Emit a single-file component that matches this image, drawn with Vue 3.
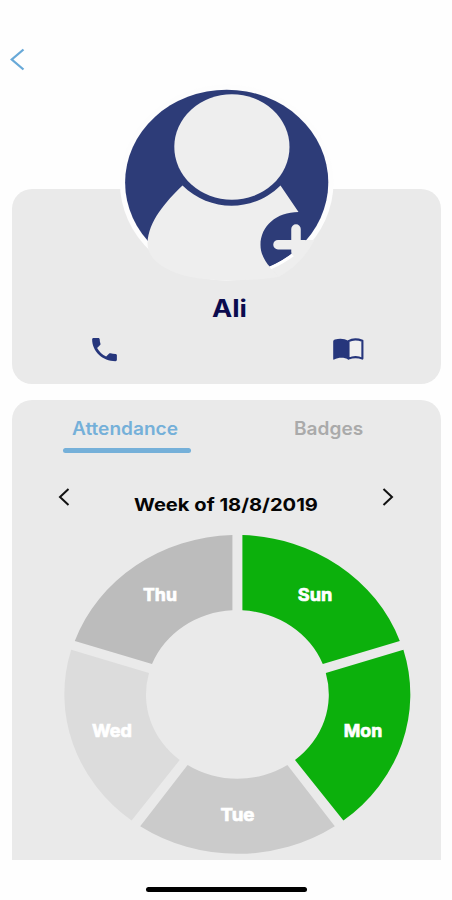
<template>
  <div class="screen">
    <header class="top-bar">
      <button class="icon-btn" aria-label="Back">
        <svg width="16" height="24" viewBox="0 0 16 24">
          <path d="M14.5 2.5 2.8 12.5 14.5 22.5" />
        </svg>
      </button>
    </header>

    <section class="card profile-card">
      <svg class="avatar" width="216" height="202" viewBox="118.5 82 216 202">
        <defs>
          <clipPath id="photo">
            <ellipse cx="226.2" cy="182.5" rx="101.6" ry="92.8" />
          </clipPath>
        </defs>
        <ellipse cx="226.2" cy="182.5" rx="106.8" ry="98" fill="#fdfdfd" />
        <ellipse cx="226.2" cy="182.5" rx="101.6" ry="92.8" fill="#2d3c78" />
        <path
          class="body"
          d="M182 185.5C165 202 148 221 147 243C147 262 168 272 190 277C213 281.5 250 281.5 278 277L270 267.5C263 260 260 252 260 245C260 226 276 212 298 212L280 185.5C252 213 209 212 182 185.5Z"
        />
        <path class="body" d="M270 267.5Q292 258 306 240L314 240Q302 264 278 277Z" />
        <path class="edge" d="M270 268Q283 262 293 254.5" />
        <g clip-path="url(#photo)">
          <ellipse cx="231.4" cy="147" rx="57.6" ry="52.8" class="body" />
        </g>
        <path class="plus" d="M277.5 244.7H304M295.5 229V252" />
      </svg>

      <h1 class="name">{{ student.name }}</h1>

      <div class="actions">
        <button class="icon-btn" aria-label="Call">
          <svg width="33" height="31" viewBox="0 0 24 24" preserveAspectRatio="none">
            <path
              fill="#26367c"
              d="M6.62 10.79c1.44 2.83 3.76 5.14 6.59 6.59l2.2-2.2c.27-.27.67-.36 1.02-.24 1.12.37 2.33.57 3.57.57.55 0 1 .45 1 1V20c0 .55-.45 1-1 1-9.39 0-17-7.61-17-17 0-.55.45-1 1-1h3.5c.55 0 1 .45 1 1 0 1.25.2 2.45.57 3.57.11.35.03.74-.25 1.02l-2.2 2.2z"
            />
          </svg>
        </button>
        <button class="icon-btn" aria-label="Notes">
          <svg width="32" height="24" viewBox="0 0 32 24">
            <path
              fill="#26367c"
              d="M1.2 4.2Q1.5 3 3 2.6C7.5 1.2 12.5 1.5 16.5 4V22.5C12.5 20.2 6.5 20 2.2 22.6Q1.2 23 1.2 22Z"
            />
            <path
              fill="#f0f0f0"
              stroke="#26367c"
              stroke-width="2.1"
              stroke-linejoin="round"
              d="M16.5 4.2C20 2.2 26 2.2 30.4 3.8V21.6C26 19.7 20.5 20 16.5 21.6Z"
            />
          </svg>
        </button>
      </div>
    </section>

    <section class="card report-card">
      <nav class="tabs">
        <button
          v-for="tab in tabs"
          :key="tab"
          class="tab"
          :class="{ active: tab === activeTab }"
          @click="activeTab = tab"
        >
          <span class="tab-label">{{ tab }}</span>
        </button>
      </nav>

      <div class="week-nav">
        <button class="icon-btn" aria-label="Previous week">
          <svg width="14" height="20" viewBox="0 0 14 20">
            <path d="M11.5 2 3 10 11.5 18" />
          </svg>
        </button>
        <span class="week-label">Week of {{ student.week }}</span>
        <button class="icon-btn" aria-label="Next week">
          <svg width="14" height="20" viewBox="0 0 14 20">
            <path d="M2.5 2 11 10 2.5 18" />
          </svg>
        </button>
      </div>

      <svg class="chart" width="352" height="326" viewBox="61 534 352 326">
        <g v-for="day in days" :key="day.label">
          <path :d="day.path" :fill="day.color" />
          <text
            :x="day.x"
            :y="day.y"
            :textLength="day.width"
            lengthAdjust="spacingAndGlyphs"
          >
            {{ day.label }}
          </text>
        </g>
      </svg>
    </section>

    <footer class="home-area">
      <div class="home-indicator"></div>
    </footer>
  </div>
</template>

<script setup>
import { ref } from "vue";

const student = { name: "Ali", week: "18/8/2019" };

const tabs = ["Attendance", "Badges"];
const activeTab = ref("Attendance");

// outer and inner arc radii of the ring
const OUTER = "173.2 159.6";
const INNER = "91.2 84.3";

// corners: outer start, outer end, inner end, inner start
const slice = (a, b, c, d) =>
  `M${a}A${OUTER} 0 0 1 ${b}L${c}A${INNER} 0 0 0 ${d}Z`;

const days = [
  {
    label: "Sun",
    color: "#0cb00c",
    path: slice("242.4 535", "399.8 641", "322.8 664", "242.4 610.3"),
    x: 315,
    y: 601,
    width: 34.5,
  },
  {
    label: "Mon",
    color: "#0cb00c",
    path: slice("403.4 649.8", "343.4 820.5", "295 760", "325.8 673"),
    x: 363,
    y: 737,
    width: 38.5,
  },
  {
    label: "Tue",
    color: "#cbcbcb",
    path: slice("334.8 826.3", "140.2 826.3", "187.6 765", "287.4 765"),
    x: 237.5,
    y: 821,
    width: 34,
  },
  {
    label: "Wed",
    color: "#dcdcdc",
    path: slice("131.6 820.5", "71.2 649.8", "149 673", "179.7 760"),
    x: 112,
    y: 737,
    width: 40,
  },
  {
    label: "Thu",
    color: "#bcbcbc",
    path: slice("74.8 641", "232.4 535", "232.4 610.3", "152 664"),
    x: 160,
    y: 601,
    width: 34,
  },
];
</script>

<style>
body {
  margin: 0;
  background: #fefefe;
}
</style>

<style scoped>
.screen {
  box-sizing: border-box;
  width: 452px;
  height: 900px;
  display: flex;
  flex-direction: column;
  overflow: hidden;
  background: #fefefe;
  font-family: Inter, "Liberation Sans", sans-serif;
}

button {
  padding: 0;
  border: 0;
  background: none;
  font: inherit;
}

.icon-btn {
  display: flex;
}

svg {
  display: block;
}

.top-bar {
  box-sizing: border-box;
  flex: none;
  height: 189px;
  padding: 47px 9px 0;
}

.top-bar path {
  fill: none;
  stroke: #68a9d8;
  stroke-width: 2.3;
}

.card {
  box-sizing: border-box;
  margin: 0 11px 0 12px;
  background: #eaeaea;
}

.profile-card {
  flex: none;
  display: flex;
  flex-direction: column;
  align-items: center;
  height: 195px;
  border-radius: 20px;
}

.avatar {
  flex: none;
  margin-top: -107px;
}

.body {
  fill: #eeeeee;
}

.edge {
  fill: none;
  stroke: #ffffff;
  stroke-width: 3;
}

.plus {
  fill: none;
  stroke: #eeeeee;
  stroke-width: 9.5;
  stroke-linecap: round;
}

.name {
  margin: 10px 0 0 5px;
  font-size: 24px;
  line-height: 30px;
  font-weight: 700;
  color: #0b0b4e;
  transform: scaleX(1.13);
}

.actions {
  display: flex;
  align-items: center;
  justify-content: space-between;
  align-self: stretch;
  height: 30px;
  margin-top: 10px;
  padding: 0 77px 0 76px;
}

.report-card {
  flex: none;
  height: 460px;
  margin-top: 16px;
  border-radius: 20px 20px 0 0;
}

.tabs {
  display: flex;
  justify-content: space-between;
  padding: 15px 48px 0 51px;
}

.tab {
  width: 128px;
  height: 38px;
  box-sizing: border-box;
  display: flex;
  flex-direction: column;
  align-items: center;
  justify-content: flex-start;
  color: #aaaaaa;
}

.tab-label {
  margin-bottom: 5px;
  font-size: 18px;
  line-height: 28px;
  font-weight: 600;
  transform: scaleX(1.06);
}

.tab.active {
  color: #75b0d9;
}

/* the label sits slightly left of its underline */
.tab.active .tab-label {
  margin-right: 5px;
}

.tab.active::after {
  content: "";
  width: 128px;
  height: 5px;
  border-radius: 3px;
  background: #75b0d9;
}

.week-nav {
  display: flex;
  align-items: center;
  justify-content: space-between;
  height: 28px;
  margin-top: 30px;
  padding: 0 46px 0 45px;
}

.week-nav path {
  fill: none;
  stroke: #111111;
  stroke-width: 2;
}

.week-label {
  padding-top: 15px;
  font-size: 17.5px;
  line-height: 28px;
  font-weight: 700;
  color: #050505;
  transform: scaleX(1.15);
}

.chart {
  margin: 23px 0 0 49px;
}

.chart text {
  fill: #ffffff;
  stroke: #ffffff;
  stroke-width: 0.7;
  font-size: 18px;
  font-weight: 700;
  text-anchor: middle;
}

.home-area {
  flex: 1;
  display: flex;
  justify-content: center;
}

.home-indicator {
  width: 161px;
  height: 5px;
  margin-top: 27px;
  border-radius: 3px;
  background: #000000;
}
</style>
